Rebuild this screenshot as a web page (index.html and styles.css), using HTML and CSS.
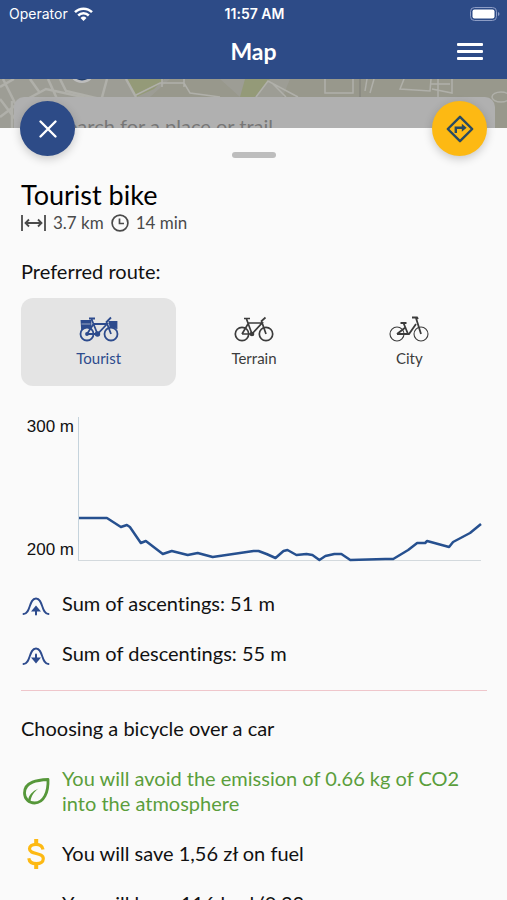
FILE: index.html
```
<!DOCTYPE html>
<html lang="en">
<head>
    <meta charset="UTF-8">
    <meta name="viewport" content="width=device-width, initial-scale=1.0">
    <title>Map</title>
    <link rel="stylesheet" href="styles.css">
</head>
<body>
    <div class="app">
        <header class="app-header">
            <div class="status-bar">
                <span class="operator">
                    Operator
                    <svg width="19" height="14" viewBox="0 0 19 14" fill="none" stroke="#fff" stroke-width="2.5">
                        <path d="M1 5.2a12 12 0 0 1 17 0M4.2 8.5a7.500 7.500 0 0 1 10.600 0"/>
                        <path d="M9.500 14 6.500 10.900a4.300 4.300 0 0 1 6 0z" fill="#fff" stroke="none"/>
                    </svg>
                </span>
                <span class="clock">11:57 AM</span>
                <span class="battery">
                    <svg width="30" height="14" viewBox="0 0 30 14">
                        <rect x="0.500" y="0.500" width="26" height="13" rx="4" fill="none" stroke="#8d9dc5"/>
                        <rect x="2.500" y="2.500" width="22" height="9" rx="2" fill="#fff"/>
                        <path d="M28 5v4q1.500-.5 1.500-2T28 5z" fill="#8d9dc5"/>
                    </svg>
                </span>
            </div>
            <div class="title-bar">
                <h1>Map</h1>
                <button class="menu-button" aria-label="Menu">
                    <span></span>
                    <span></span>
                    <span></span>
                </button>
            </div>
        </header>

        <section class="map">
            <svg class="map-tiles" viewBox="0 0 507 49" preserveAspectRatio="xMidYMin slice" fill="none">
                <rect width="507" height="49" fill="#9d9d95"/>
                <path d="M126 0h38l-10 10-18 8zM245 0h25l-15 18h-15z" fill="#949a78"/>
                <path d="M170 0h50l20 18h-90zM290 0h217v49H270z" fill="#98988c"/>
                <g stroke="#b0b0aa" stroke-width="1.500">
                    <path d="M0 8 14 0M3 0l13 26 30-16 55 12 6-22M16 26 0 38M12 22v27M48 0l10 22" stroke-width="2.500"/>
                    <path d="M0 20l22 29M30 0l10 14M60 0l6 12 34 8M126 0l10 18" stroke-width="2.500"/>
                    <path d="M136 16 160 4h24l6 10 30 4M162 0v8M184 0v8"/>
                    <path d="M256 18 268 2l30 16M272 4l14 14M325 0v14h28V0M367 0l-2 12M374 0l-4 14"/>
                    <path d="M404 0l-4 10 30 2 1-12M430 5h20M438 0v18M452 0v14l-20-4"/>
                    <ellipse cx="501" cy="18" rx="9" ry="5"/>
                </g>
                <path d="M360 0v20" stroke="#7f7f78"/>
                <circle cx="82" cy="-9" r="13" fill="#bdbdbd"/>
                <circle cx="82" cy="-9" r="10.500" fill="#233f6c"/>
            </svg>
            <input class="search" type="text" placeholder="Search for a place or trail" aria-label="Search for a place or trail">
        </section>

        <main class="sheet">
            <div class="sheet-top">
                <button class="fab fab-close" aria-label="Close">
                    <svg width="20" height="20" viewBox="0 0 20 20" stroke="#fff" stroke-width="2.400" stroke-linecap="round">
                        <path d="M2.500 2.500l15 15M17.500 2.500l-15 15"/>
                    </svg>
                </button>
                <span class="handle"></span>
                <button class="fab fab-route" aria-label="Navigate">
                    <svg width="28" height="28" viewBox="0 0 28 28" fill="none" stroke="#294a62" stroke-width="2.400" stroke-linejoin="round">
                        <path d="M14 1.800 26.200 14 14 26.200 1.800 14z"/>
                        <path d="M9.800 18v-5.200H17" stroke-linejoin="miter"/>
                        <path d="M15.800 8.800v8l4.800-4z" fill="#294a62" stroke="none"/>
                    </svg>
                </button>
            </div>

            <div class="sheet-content">
                <h2>Tourist bike</h2>
                <div class="route-meta">
                    <svg width="25" height="18" viewBox="0 0 25 18" fill="none" stroke="#4a4a4a" stroke-width="1.800">
                        <path d="M1 1v16M24 1v16M4 9h17M8 5.500 4.500 9 8 12.500M17 5.500 20.500 9 17 12.500"/>
                    </svg>
                    <span>3.7 km</span>
                    <svg width="18" height="18" viewBox="0 0 18 18" fill="none" stroke="#4a4a4a" stroke-width="1.700">
                        <circle cx="9" cy="9" r="7.900"/>
                        <path d="M8.500 4.500v5h4.500"/>
                    </svg>
                    <span>14 min</span>
                </div>

                <h3 class="route-heading">Preferred route:</h3>
                <div class="route-options">
                    <button class="route-option active">
                        <svg width="40" height="26" viewBox="0 0 40 26" fill="none" stroke="currentColor" stroke-width="1.800">
                            <circle cx="8" cy="18" r="6.500"/>
                            <circle cx="32" cy="18" r="6.500"/>
                            <path d="M8 18 14.500 8H28L18.500 18H8M12.500 3l6 15M10 2.500h6M32 18 27.500 6l4.500-4.500"/>
                            <path d="M2.500 5h9v7L8 10.500 3 13zM30.500 6h7v6L34 10.500l-2.500.5z" fill="currentColor"/>
                            <path d="M2.500 8h9" stroke="#e4e4e4" stroke-width=".6"/>
                            <circle cx="18.500" cy="18" r="1.800" fill="currentColor"/>
                            <circle cx="8" cy="18" r="1" fill="currentColor"/>
                        </svg>
                        <span>Tourist</span>
                    </button>
                    <button class="route-option">
                        <svg width="40" height="26" viewBox="0 0 40 26" fill="none" stroke="currentColor" stroke-width="1.700">
                            <circle cx="8" cy="18" r="6.700"/>
                            <circle cx="32" cy="18" r="6.700"/>
                            <path d="M8 18 14.500 7H28L18 18H8M12.500 3 18 18M10 2.500h6M32 18 27.500 5l4-3.500"/>
                            <circle cx="18" cy="18" r="1.500" fill="currentColor"/>
                        </svg>
                        <span>Terrain</span>
                    </button>
                    <button class="route-option">
                        <svg width="40" height="26" viewBox="0 0 40 26" fill="none" stroke="currentColor" stroke-width="1.800">
                            <g stroke-width="1.100">
                                <circle cx="8" cy="18" r="7"/>
                                <circle cx="32" cy="18" r="7"/>
                            </g>
                            <path d="M8 18 17 11M8 18h12l7-10M14.500 7l4.500 11M11.500 7h6M32 18 27 2M23 1.500h5l1 1.500"/>
                        </svg>
                        <span>City</span>
                    </button>
                </div>

                <div class="elevation">
                    <div class="elevation-labels">
                        <span>300 m</span>
                        <span>200 m</span>
                    </div>
                    <svg class="elevation-plot" viewBox="0 0 403 143" preserveAspectRatio="none" role="img" aria-label="Elevation profile">
                        <polyline points="0,101 28,101 42,110 48,108 51,110 62,126 67,124 84,137 93,134 97,135 109,138 119,136 134,140 175,134 180,134 188,137 197,141 205,134 209,133 218,138 228,137 234,138 241,143 247,139 256,137 263,137 272,143 307,142 315,142 330,133 339,126 347,126 349,124 371,130 375,125 392,116 403,107"/>
                    </svg>
                </div>

                <ul class="facts">
                    <li>
                        <svg width="30" height="30" viewBox="0 0 30 30" fill="none" stroke="#2d4b8d" stroke-width="1.900" stroke-linecap="round">
                            <path d="M2.500 25c7.500 0 5-15.500 12.500-15.500S20 25 27.500 25"/>
                            <path d="M15 19v6.500" stroke-width="2"/>
                            <path d="M15 16.500 10 22.500h10z" fill="#2d4b8d" stroke="none"/>
                        </svg>
                        <span>Sum of ascentings: 51 m</span>
                    </li>
                    <li>
                        <svg width="30" height="30" viewBox="0 0 30 30" fill="none" stroke="#2d4b8d" stroke-width="1.900" stroke-linecap="round">
                            <path d="M2.500 25c7.500 0 5-15.500 12.500-15.500S20 25 27.500 25"/>
                            <path d="M15 15.500v4" stroke-width="2"/>
                            <path d="M15 24.500 10 18.500h10z" fill="#2d4b8d" stroke="none"/>
                        </svg>
                        <span>Sum of descentings: 55 m</span>
                    </li>
                </ul>

                <hr>

                <h3 class="savings-heading">Choosing a bicycle over a car</h3>
                <ul class="facts">
                    <li class="eco">
                        <svg width="30" height="30" viewBox="0 0 30 30" fill="none" stroke="#56973a" stroke-width="2.800" stroke-linejoin="round">
                            <path d="M27 3.500C17 4 3.500 5.500 3.500 17c0 6 4.500 10 10 10C23 27 27.500 16 27 3.500z"/>
                            <path d="M7 24c1-5 4-8.500 10.500-11.500C13 16 10.500 19.500 9.500 25z" fill="#56973a" stroke="none"/>
                        </svg>
                        <span>You will avoid the emission of 0.66 kg of CO2 into the atmosphere</span>
                    </li>
                    <li>
                        <svg width="30" height="30" viewBox="0 0 30 30" fill="none" stroke="#fdb913" stroke-width="3.200">
                            <path d="M22 10.500C21.500 7 18.800 5.300 15 5.300c-4 0-6.500 1.800-6.500 4.500 0 6.500 13.800 3 13.800 10 0 3-2.800 4.900-6.800 4.900-4.500 0-7.300-2-7.700-5.500"/>
                            <path d="M15.200 0v5M15.200 25v5" stroke-width="4"/>
                        </svg>
                        <span>You will save 1,56 zł on fuel</span>
                    </li>
                    <li>
                        <svg width="30" height="30" viewBox="0 0 30 30"></svg>
                        <span>You will burn 116 kcal (0.33</span>
                    </li>
                </ul>
            </div>
        </main>
    </div>
</body>
</html>
```

FILE: styles.css
```
:root {
    --primary-color: #2d4b87;
    --accent-color: #fdb913;
    --eco-color: #5a9e3c;
    --sheet-color: #fafafa;
    --text-color: #111;
    --muted-color: #4a4a4a;
}

* {
    box-sizing: border-box;
    margin: 0;
    padding: 0;
}

body {
    background-color: var(--sheet-color);
    color: var(--text-color);
    font-family: Lato, "Open Sans", sans-serif;
    font-size: 20px;
    font-variant-ligatures: none;
    line-height: 25px;
}

button {
    border: none;
    background: none;
    font: inherit;
    color: inherit;
    cursor: pointer;
}

svg {
    display: block;
    flex-shrink: 0;
}

.app {
    height: 100vh;
    overflow: hidden;
}

.app-header {
    background-color: var(--primary-color);
    color: white;
}

.status-bar {
    display: grid;
    grid-template-columns: 1fr auto 1fr;
    align-items: center;
    height: 27px;
    padding: 0 7px 0 9px;
    font-family: Inter, sans-serif;
    font-size: 14px;
}

.operator {
    display: flex;
    align-items: center;
    gap: 6px;
}

.clock {
    font-weight: 600;
}

.battery {
    justify-self: end;
}

.title-bar {
    display: grid;
    grid-template-columns: 1fr auto 1fr;
    align-items: center;
    height: 52px;
    padding: 0 24px 4px;
}

.title-bar h1 {
    grid-column: 2;
    font-size: 23px;
    font-weight: 700;
}

.menu-button {
    justify-self: end;
    display: flex;
    flex-direction: column;
    gap: 4px;
}

.menu-button span {
    width: 26px;
    height: 3px;
    border-radius: 1px;
    background-color: white;
}

.map {
    position: relative;
    height: 49px;
    padding: 18px 12px 0 14px;
    overflow: hidden;
}

.map-tiles {
    position: absolute;
    inset: 0;
    width: 100%;
    height: 100%;
}

.search {
    position: relative;
    width: 100%;
    height: 58px;
    padding: 0 42px;
    border: none;
    border-radius: 10px;
    background-color: #b0b0b0;
    font: inherit;
}

.search::placeholder {
    color: #777;
}

.sheet {
    background-color: var(--sheet-color);
}

.sheet-top {
    position: relative;
    display: flex;
    justify-content: space-between;
    align-items: flex-start;
    height: 57px;
    margin-top: -27px;
    padding: 0 20px;
}

.fab {
    display: flex;
    align-items: center;
    justify-content: center;
    width: 55px;
    height: 55px;
    border-radius: 50%;
    box-shadow: 0 3px 10px rgba(0, 0, 0, 0.2);
}

.fab-close {
    background-color: var(--primary-color);
}

.fab-route {
    background-color: var(--accent-color);
}

.handle {
    align-self: flex-end;
    width: 44px;
    height: 6px;
    border-radius: 3px;
    background-color: #bdbdbd;
}

.sheet-content {
    padding: 21px 20px 0 21px;
}

h2 {
    color: #000;
    font-size: 27px;
    font-weight: 400;
    line-height: 32px;
}

h3 {
    font-size: 20px;
    font-weight: 400;
}

.route-meta {
    display: flex;
    align-items: center;
    gap: 7px;
    color: var(--muted-color);
    font-size: 17px;
    line-height: 24px;
}

.route-heading {
    margin-top: 24px;
}

.route-options {
    display: grid;
    grid-template-columns: repeat(3, 1fr);
    margin-top: 14px;
}

.route-option {
    display: flex;
    flex-direction: column;
    align-items: center;
    gap: 4px;
    padding: 18px 0 15px;
    border-radius: 12px;
    color: #3c3c3c;
    font-size: 15px;
}

.route-option.active {
    background-color: #e4e4e4;
    color: #2d4b8d;
}

.elevation {
    display: flex;
    gap: 4px;
    height: 144px;
    margin-top: 31px;
    padding-right: 6px;
}

.elevation-labels {
    display: flex;
    flex-direction: column;
    justify-content: space-between;
    width: 53px;
    padding-bottom: 1px;
    font-family: "Liberation Sans", Arial, sans-serif;
    font-size: 17px;
    line-height: 20px;
    text-align: right;
}

.elevation-plot {
    flex: 1;
    min-width: 0;
    height: 100%;
    overflow: visible;
    border-left: 1px solid #c5d3dc;
    border-bottom: 1px solid #d3d9dd;
}

.elevation-plot polyline {
    fill: none;
    stroke: #26508f;
    stroke-width: 2.5px;
    stroke-linejoin: round;
    vector-effect: non-scaling-stroke;
}

.facts {
    display: flex;
    flex-direction: column;
    gap: 25px;
    list-style: none;
}

.elevation + .facts {
    margin-top: 30px;
}

.facts li {
    display: flex;
    align-items: center;
    gap: 11px;
    min-height: 25px;
}

.facts svg {
    margin: -3px 0;
}

.eco {
    color: var(--eco-color);
}

hr {
    height: 1px;
    margin-top: 24px;
    border: none;
    background-color: #efc6cb;
}

.savings-heading {
    margin: 25px 0;
}
```
